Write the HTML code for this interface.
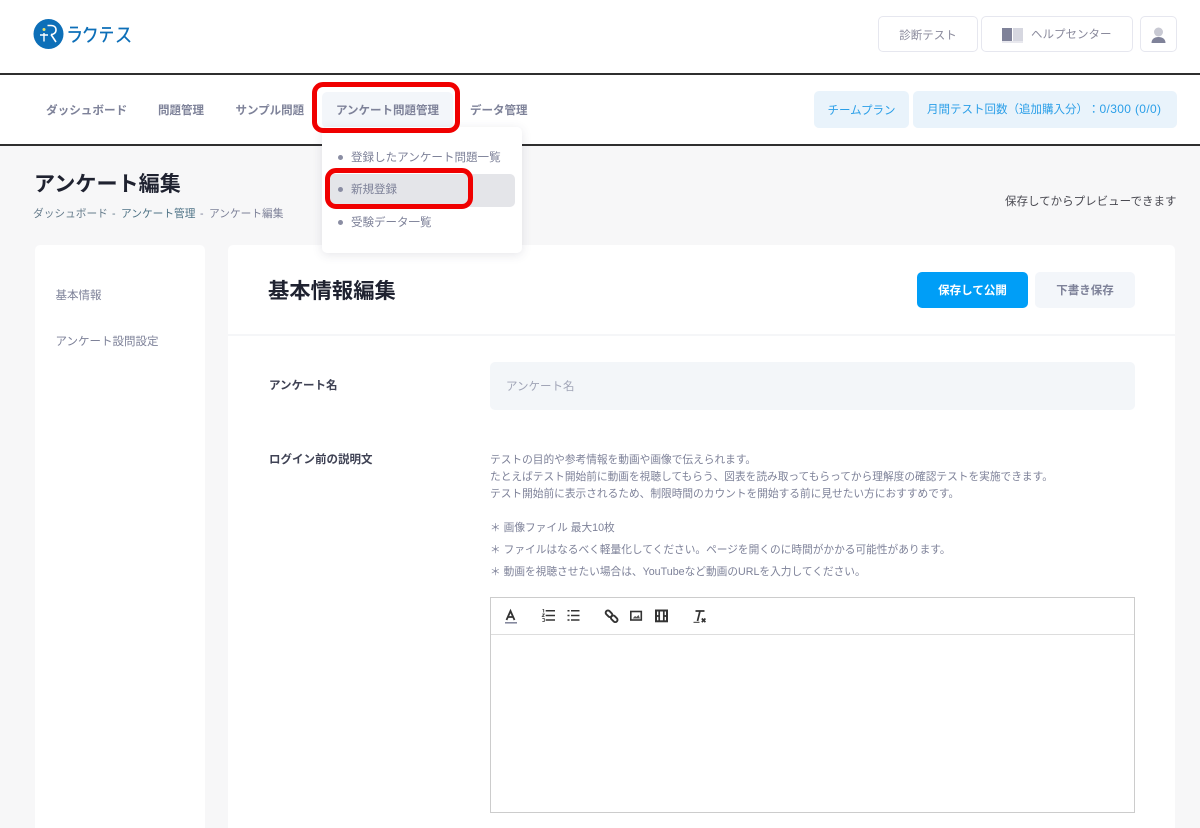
<!DOCTYPE html>
<html lang="ja"><head><meta charset="utf-8"><title>アンケート編集</title>
<style>
*{box-sizing:border-box}
html,body{margin:0;padding:0}
body{width:1200px;height:828px;position:relative;overflow:hidden;background:#fff;font-family:"Liberation Sans","Noto Sans CJK JP",sans-serif;color:#7e8299;text-spacing-trim:space-all}
.a{position:absolute;white-space:nowrap}
.t{position:absolute;white-space:nowrap;line-height:16px}
.b{font-weight:700}
.btn{position:absolute;display:flex;align-items:center;justify-content:center;white-space:nowrap;border-radius:5px}
.dot{position:absolute;width:5px;height:5px;border-radius:50%;background:#8a8da3}
.red{position:absolute;border:5px solid #f00000;border-radius:11px}
</style></head><body>

<!-- page background -->
<div class="a" style="left:0;top:145px;width:1200px;height:683px;background:#f7f7f8"></div>

<!-- logo -->
<svg class="a" style="left:33px;top:18px" width="100" height="32" viewBox="0 0 100 32">
<circle cx="15.500" cy="16" r="15" fill="#0d6fb8"/>
<path d="M7 17h8M11 15v8.500" stroke="#fff" stroke-width="1.400" fill="none"/>
<circle cx="11" cy="11.500" r="1.500" fill="#e8e26a"/>
<path d="M14.500 7.500h3.500c3.500 0 5 2 5 4.500s-2 4.500-5 4.500M18 16.500l5 7.500" stroke="#fff" stroke-width="1.600" fill="none"/>
<g stroke="#0d6fb8" stroke-width="1.800" fill="none">
<path d="M37 9.500h8M35.500 14h11.500c-.5 5-3 8-7.500 10"/>
<path d="M54.500 9c-.8 2.500-2 4.500-3.500 6M54 11.500h8.500c-.5 5.500-3 10-8 12.500"/>
<path d="M69 10h9M67 14.500h13M73.500 14.500c0 4-1 7-3.500 9.500"/>
<path d="M85.500 10.500h9.500c-1.500 5-4.500 10-11 13.500M91 18l6 6"/>
</g>
</svg>

<!-- header buttons -->
<div class="btn" style="left:878px;top:16px;width:100px;height:36px;padding-top:1px;border:1px solid #e6e7ef;background:#fff;font-size:11.500px;color:#8a8a9c">診断テスト</div>
<div class="btn" style="left:981px;top:16px;width:152px;height:36px;border:1px solid #e6e7ef;background:#fff"></div>
<svg class="a" style="left:1002px;top:27px" width="21" height="16" viewBox="0 0 21 16"><rect x="0" y="1" width="10" height="14" fill="#7f8299"/><rect x="11" y="1" width="10" height="14" fill="#d6d7e0"/><rect x="0" y="14" width="21" height="2" fill="#e8e8ee"/></svg>
<div class="t" style="left:1031px;top:27px;font-size:11.500px;color:#8a8a9c">ヘルプセンター</div>
<div class="btn" style="left:1140px;top:16px;width:37px;height:36px;border:1px solid #e6e7ef;background:#fff"></div>
<svg class="a" style="left:1150px;top:27px" width="17" height="16" viewBox="0 0 17 16"><circle cx="8.500" cy="5" r="4.500" fill="#c8c9d3"/><path d="M1.500 16c0-4 3-6 7-6s7 2 7 6z" fill="#7f8299"/></svg>

<!-- dark rules -->
<div class="a" style="left:0;top:73px;width:1200px;height:2px;background:#2f2f2f"></div>
<div class="a" style="left:0;top:144px;width:1200px;height:2px;background:#2f2f2f"></div>

<!-- nav -->
<div class="t b" style="left:46px;top:103px;font-size:11.600px">ダッシュボード</div>
<div class="t b" style="left:158px;top:103px;font-size:11.500px">問題管理</div>
<div class="t b" style="left:235.500px;top:103px;font-size:11.500px">サンプル問題</div>
<div class="a" style="left:322px;top:92px;width:131px;height:36px;background:#f3f6fa;border-radius:5px"></div>
<div class="t b" style="left:336px;top:103px;font-size:11.500px">アンケート問題管理</div>
<div class="t b" style="left:470px;top:103px;font-size:11.500px">データ管理</div>
<div class="btn" style="left:814px;top:91px;width:95px;height:37px;background:#e9f3fb;color:#2b9fe8;font-size:11.500px">チームプラン</div>
<div class="btn" style="left:913px;top:91px;width:264px;height:37px;background:#e9f3fb;color:#2b9fe8;font-size:11.500px"></div>
<div class="t" style="left:927px;top:101px;font-size:11.500px;color:#2b9fe8">月間テスト回数（追加購入分）：<span style="font-size:12px;letter-spacing:.35px">0/300 (0/0)</span></div>

<!-- page title -->
<div class="t b" style="left:34px;top:172px;font-size:21.100px;line-height:26px;color:#1f2230">アンケート編集</div>
<div class="t" style="left:33px;top:206px;font-size:10.700px;color:#667c8c">ダッシュボード</div>
<div class="t" style="left:112px;top:206px;font-size:10.700px;color:#667c8c">-</div>
<div class="t" style="left:121px;top:206px;font-size:10.700px;color:#4f7386">アンケート管理</div>
<div class="t" style="left:200px;top:206px;font-size:10.700px;color:#7e8299">-</div>
<div class="t" style="left:209px;top:206px;font-size:10.700px;color:#7e8299">アンケート編集</div>
<div class="t" style="left:1005px;top:194px;font-size:11.500px;color:#4a4a52">保存してからプレビューできます</div>

<!-- sidebar card -->
<div class="a" style="left:35px;top:245px;width:170px;height:583px;background:#fff;border-radius:5px 5px 0 0"></div>
<div class="t" style="left:55.500px;top:288px;font-size:11.500px">基本情報</div>
<div class="t" style="left:55.500px;top:334px;font-size:11.500px">アンケート設問設定</div>

<!-- main card -->
<div class="a" style="left:228px;top:245px;width:947px;height:583px;background:#fff;border-radius:5px 5px 0 0"></div>
<div class="t b" style="left:268px;top:277px;font-size:21.300px;line-height:28px;color:#1f2230">基本情報編集</div>
<div class="btn b" style="left:917px;top:272px;width:111px;height:36px;background:#009ef7;color:#fff;font-size:11.500px">保存して公開</div>
<div class="btn b" style="left:1035px;top:272px;width:100px;height:36px;background:#f3f6fa;color:#7e8299;font-size:11.500px">下書き保存</div>
<div class="a" style="left:228px;top:334px;width:947px;height:2px;background:#f5f6f8"></div>

<div class="t b" style="left:269px;top:378px;font-size:11.500px;color:#3f4254">アンケート名</div>
<div class="a" style="left:490px;top:362px;width:645px;height:48px;background:#f3f6f9;border-radius:5px"></div>
<div class="t" style="left:506px;top:379px;font-size:11.500px;color:#a1a5b7">アンケート名</div>

<div class="t b" style="left:269px;top:452px;font-size:11.500px;color:#3f4254">ログイン前の説明文</div>
<div class="t" style="left:490px;top:452px;font-size:10.700px;color:#7e8299">テストの目的や参考情報を動画や画像で伝えられます。</div>
<div class="t" style="left:490px;top:469px;font-size:10.700px;color:#7e8299">たとえばテスト開始前に動画を視聴してもらう、図表を読み取ってもらってから理解度の確認テストを実施できます。</div>
<div class="t" style="left:490px;top:486px;font-size:10.700px;color:#7e8299">テスト開始前に表示されるため、制限時間のカウントを開始する前に見せたい方におすすめです。</div>
<div class="t" style="left:490px;top:520px;font-size:10.700px;color:#7e8299">＊ 画像ファイル 最大10枚</div>
<div class="t" style="left:490px;top:542px;font-size:10.700px;color:#7e8299">＊ ファイルはなるべく軽量化してください。ページを開くのに時間がかかる可能性があります。</div>
<div class="t" style="left:490px;top:564px;font-size:10.700px;color:#7e8299">＊ 動画を視聴させたい場合は、YouTubeなど動画のURLを入力してください。</div>

<!-- editor -->
<div class="a" style="left:490px;top:597px;width:645px;height:216px;border:1px solid #ccc;background:#fff"></div>
<div class="a" style="left:491px;top:634px;width:643px;height:1px;background:#ddd"></div>
<svg class="a" style="left:500px;top:606px" width="210" height="20" viewBox="0 0 210 20" fill="none" stroke="#333">
<path d="M6.500 14l4-9 4 9M8 11h5" stroke-width="1.800"/><path d="M5 16.800h12" stroke="#7e8299" stroke-width="1.500"/>
<path d="M45.700 4.700h9.300M45.700 9.500h9.300M45.700 14h9.300" stroke-width="1.500"/>
<path d="M42.500 3.500h1.200v3M42.300 8h2l-2 2.500h2.200M42.300 12.500h2v3h-2" stroke-width=".8"/>
<path d="M71 4.700h8.500M71 9.500h8.500M71 14h8.500" stroke-width="1.500"/><path d="M67.500 4.700h2M67.500 9.500h2M67.500 14h2" stroke-width="1.500"/>
<g stroke-width="1.900"><rect x="105.300" y="5.500" width="7.500" height="4.500" rx="2.200" transform="rotate(45 109 7.700)"/><rect x="110.500" y="10.500" width="7.500" height="4.500" rx="2.200" transform="rotate(45 114.200 12.700)"/></g>
<rect x="130.800" y="5.500" width="10.500" height="8.500" stroke-width="1.600"/><path d="M132.500 12.500l2.500-2.500 1.500 1 2-2 1.500 3.500z" fill="#555" stroke="none"/>
<rect x="156" y="4.500" width="11" height="10.800" stroke-width="2"/><path d="M159.200 4.500v10.800M163.800 4.500v10.800M156 10h3M164 10h3" stroke-width="1.700"/>
<path d="M195.500 5h9M200 5l-2.500 10" stroke-width="1.700"/><path d="M193.500 16.300h6" stroke-width="1"/><path d="M201.800 12.500l3.600 3.600M205.400 12.500l-3.600 3.600" stroke-width="1.700"/>
</svg>

<!-- dropdown -->
<div class="a" style="left:322px;top:127px;width:200px;height:126px;background:#fff;border-radius:5px;box-shadow:0 2px 10px rgba(60,60,90,.13)"></div>
<div class="a" style="left:329px;top:174px;width:186px;height:33px;background:#e4e5e9;border-radius:5px"></div>
<div class="dot" style="left:338px;top:155px"></div>
<div class="t" style="left:351px;top:150px;font-size:11.550px">登録したアンケート問題一覧</div>
<div class="dot" style="left:338px;top:187px"></div>
<div class="t" style="left:351px;top:182px;font-size:11.500px">新規登録</div>
<div class="dot" style="left:338px;top:220px"></div>
<div class="t" style="left:351px;top:215px;font-size:11.500px">受験データ一覧</div>

<!-- red highlight boxes -->
<div class="red" style="left:312px;top:82px;width:148px;height:51px"></div>
<div class="red" style="left:325px;top:168px;width:148px;height:41px"></div>

</body></html>
